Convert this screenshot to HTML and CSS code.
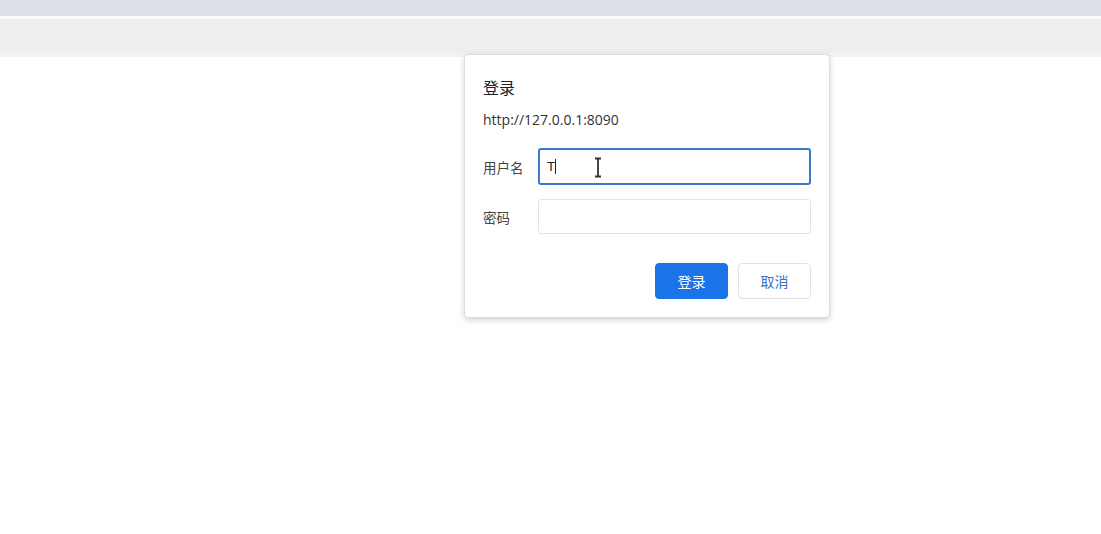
FILE: index.html
```html
<!DOCTYPE html>
<html>
<head>
  <title>登录</title>
  <link rel="stylesheet" href="styles.css">
</head>
<body>
  <div class="tabstrip"></div>
  <div class="toolbar"></div>
  <div class="page"></div>

  <div class="dialog">
    <div class="title">登录</div>
    <div class="origin">http://127.0.0.1:8090</div>
    <div class="row">
      <label class="label">用户名</label>
      <div class="field focused"><span class="typed">T</span><span class="caret"></span></div>
    </div>
    <div class="row">
      <label class="label">密码</label>
      <div class="field"></div>
    </div>
    <div class="actions">
      <button class="btn primary">登录</button>
      <button class="btn">取消</button>
    </div>
  </div>

  <svg class="ibeam" width="10" height="21" viewBox="0 0 10 21">
    <path d="M2 1.5h6M5 1.5v18M2 19.5h6" stroke="#333" stroke-width="1.8" fill="none"/>
  </svg>
</body>
</html>
```

FILE: styles.css
```css
body {
  margin: 0;
  padding: 0;
  background: #ffffff;
  font-family: "Noto Sans CJK SC", "Liberation Sans", sans-serif;
  color: #333;
}

.tabstrip {
  height: 16px;
  background: #dcdfe7;
  border-bottom: 3px solid #f7f8fa;
}

.toolbar {
  height: 34px;
  background: #eceef0;
  border-bottom: 4px solid #f2f3f4;
}

.page {
  height: 477px;
}

.dialog {
  position: absolute;
  left: 464px;
  top: 54px;
  width: 366px;
  height: 264px;
  box-sizing: border-box;
  padding: 22px 18px 0 18px;
  background: #fff;
  border: 1px solid #dcdcdc;
  border-radius: 4px;
  box-shadow: 0 2px 6px rgba(0, 0, 0, 0.18);
}

.title {
  font-size: 16px;
  line-height: 20px;
  color: #222;
}

.origin {
  margin-top: 13px;
  font-family: "Open Sans", "Liberation Sans", sans-serif;
  font-size: 14px;
  line-height: 19px;
  color: #333;
}

.row {
  display: flex;
  align-items: center;
  margin-top: 19px;
}

.row + .row {
  margin-top: 14px;
}

.label {
  width: 55px;
  font-size: 13.5px;
  color: #444;
}

.field {
  width: 273px;
  height: 35px;
  box-sizing: border-box;
  border: 1px solid #e3e3e3;
  border-radius: 3px;
  display: flex;
  align-items: center;
  padding-left: 8px;
}

.field.focused {
  height: 37px;
  border: 2px solid #3b78c9;
  padding-left: 7px;
}

.typed {
  font-family: "Liberation Sans", sans-serif;
  font-size: 13px;
  color: #222;
}

.caret {
  width: 1px;
  height: 15px;
  background: #222;
}

.actions {
  display: flex;
  justify-content: flex-end;
  gap: 10px;
  margin-top: 29px;
}

.btn {
  width: 73px;
  height: 36px;
  border: 1px solid #e2e2e2;
  border-radius: 4px;
  background: #fff;
  color: #3b6fc4;
  font-family: "Noto Sans CJK SC", sans-serif;
  font-size: 14px;
  cursor: pointer;
}

.btn.primary {
  background: #1a73e8;
  border-color: #1a73e8;
  color: #fff;
}

.ibeam {
  position: absolute;
  left: 593px;
  top: 157px;
}
```
